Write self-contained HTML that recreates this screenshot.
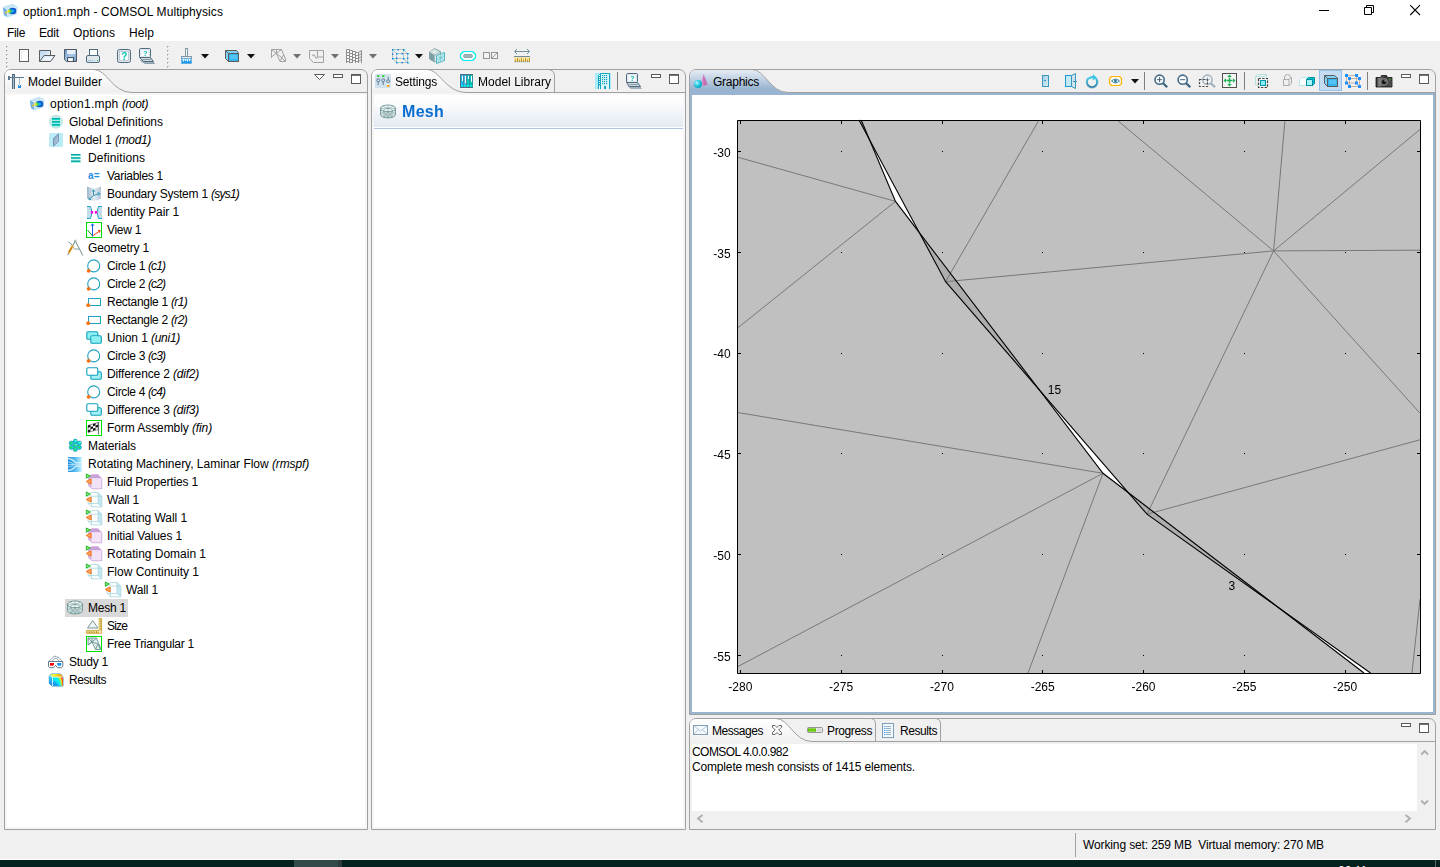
<!DOCTYPE html>
<html lang="en"><head><meta charset="utf-8"><title>option1.mph - COMSOL Multiphysics</title>
<style>
*{box-sizing:border-box;margin:0;padding:0}
html,body{width:1440px;height:867px;overflow:hidden;background:#f0f0f0}
body{position:relative;font-family:"Liberation Sans",sans-serif;font-size:12px;color:#000;line-height:1}
.abs{position:absolute}
.t{position:absolute;white-space:nowrap;font-size:12px;line-height:14px;height:14px}
svg{position:absolute;overflow:visible}
#titlebar{position:absolute;left:0;top:0;width:1440px;height:41px;background:#fff}
#taskbar{position:absolute;left:0;top:860px;width:1440px;height:7px;background:#04201f;overflow:hidden}
.panel{position:absolute;border:1px solid #a0a0a0;border-radius:7px 7px 0 0;background:#f0f0f0}
.content{position:absolute;background:#fff}
i{font-style:italic}
#tb,#hdr{opacity:.999;will-change:opacity}

</style></head><body>
<svg width="0" height="0" style="left:0;top:0">
 <defs>
  <linearGradient id="gi1" x1="0" y1="0" x2="1" y2="1"><stop offset="0" stop-color="#8fc8ea"/><stop offset="1" stop-color="#d9eef9"/></linearGradient>
  <radialGradient id="gi2" cx="0.5" cy="0.5" r="0.6"><stop offset="0" stop-color="#25c8f0"/><stop offset="0.55" stop-color="#0a5fd8"/><stop offset="1" stop-color="#0838a8"/></radialGradient>
  <linearGradient id="gi3" x1="0" y1="0" x2="1" y2="0"><stop offset="0" stop-color="#9fb6cc"/><stop offset="0.5" stop-color="#e4ecf3"/><stop offset="1" stop-color="#b4c6d6"/></linearGradient>
  <linearGradient id="gi4" x1="0" y1="0" x2="1" y2="0"><stop offset="0" stop-color="#1a8ade"/><stop offset="0.55" stop-color="#5cc0f0"/><stop offset="1" stop-color="#d2f4ff"/></linearGradient>
  <linearGradient id="gi5" x1="0" y1="0" x2="1" y2="1"><stop offset="0" stop-color="#7f9cc0"/><stop offset="1" stop-color="#c4d4e6"/></linearGradient>
  <linearGradient id="gi7" x1="0" y1="0" x2="1" y2="0"><stop offset="0" stop-color="#b8f0a0"/><stop offset="0.35" stop-color="#fff020"/><stop offset="1" stop-color="#ff9010"/></linearGradient>
  <linearGradient id="gi8" x1="0" y1="0" x2="0" y2="1"><stop offset="0" stop-color="#30d8f8"/><stop offset="1" stop-color="#1e80e0"/></linearGradient>
  <linearGradient id="gi6" x1="0" y1="0" x2="1" y2="1"><stop offset="0" stop-color="#ffd040"/><stop offset="0.35" stop-color="#ff5a10"/><stop offset="0.6" stop-color="#20d8f0"/><stop offset="1" stop-color="#1e70e8"/></linearGradient>

  <symbol id="i-root" viewBox="0 0 16 16" overflow="visible">
   <path d="M0.800 4 L10.500 1 L15.600 3.500 L14.800 11.500 L5.500 14.400 L2 12 Z" fill="url(#gi1)" opacity="0.92"/>
   <path d="M0.800 4 L5 6 L5.500 14.400 L2 12 Z" fill="#4f9ad6" opacity="0.650"/>
   <path d="M0.800 4 L10.500 1 L15.600 3.500 L5 6 Z" fill="#cfe8f8" opacity="0.700"/>
   <path d="M0.800 4 L5 6 L5.500 14.400 M5 6 L15.600 3.500" stroke="#eef8fe" stroke-width="0.700" fill="none"/>
   <ellipse cx="10.600" cy="8" rx="3.700" ry="3.200" fill="url(#gi2)"/>
   <ellipse cx="8" cy="8.300" rx="1.900" ry="2.200" fill="#28c878"/>
   <ellipse cx="6.800" cy="8.200" rx="1.300" ry="1.500" fill="#e8e020"/>
   <circle cx="4" cy="9.600" r="1" fill="#f0c028"/>
  </symbol>
  <symbol id="i-gdef" viewBox="0 0 16 16" overflow="visible">
   <circle cx="8" cy="7.800" r="7" fill="#c4e8e4"/>
   <rect x="4" y="4" width="8" height="1.800" fill="#00b5ad"/><rect x="4" y="7" width="8" height="1.800" fill="#00b5ad"/><rect x="4" y="10" width="8" height="1.800" fill="#00b5ad"/>
   <rect x="4" y="5.400" width="8" height="0.700" fill="#00e0d6"/><rect x="4" y="8.400" width="8" height="0.700" fill="#00e0d6"/><rect x="4" y="11.400" width="8" height="0.700" fill="#00e0d6"/>
  </symbol>
  <symbol id="i-model" viewBox="0 0 16 16" overflow="visible">
   <rect x="1" y="1" width="14" height="14" rx="1.500" fill="#b9ecf6"/>
   <path d="M5.500 6.500 L10.500 1.800 V9.500 L5.500 14.200 Z" fill="url(#gi5)" stroke="#5f7fa8" stroke-width="0.700" stroke-linejoin="round"/>
  </symbol>
  <symbol id="i-defs" viewBox="0 0 16 16" overflow="visible">
   <rect x="4" y="4" width="9.500" height="1.700" fill="#00a89f"/><rect x="4" y="7.200" width="9.500" height="1.700" fill="#00a89f"/><rect x="4" y="10.400" width="9.500" height="1.700" fill="#00a89f"/>
   <rect x="4" y="5.500" width="9.500" height="0.600" fill="#60e8e0"/><rect x="4" y="8.700" width="9.500" height="0.600" fill="#60e8e0"/><rect x="4" y="11.900" width="9.500" height="0.600" fill="#60e8e0"/>
  </symbol>
  <symbol id="i-var" viewBox="0 0 16 16" overflow="visible">
   <text x="2" y="10.800" font-size="10" font-weight="bold" opacity="0.99" fill="#1e8ee6" font-family="Liberation Sans, sans-serif" letter-spacing="0.300">a=</text>
  </symbol>
  <symbol id="i-bsys" viewBox="0 0 16 16" overflow="visible">
   <path d="M1 0.500 Q8 4 15 0.500 V12.500 Q8 17 1 12.500 Z" fill="url(#gi3)"/>
   <path d="M7.500 9.500 V4 M6 5.600 L7.500 3.800 L9 5.600 M7.500 9.500 L3 13.500 M3 11.600 V13.600 H5 M7.500 9.500 L13.500 7.500 M11.500 6.600 L13.600 7.500 L12.600 9.400" fill="none" stroke="#218fb0" stroke-width="0.900"/>
  </symbol>
  <symbol id="i-ipair" viewBox="0 0 16 16" overflow="visible">
   <path d="M1 2.500 H4.500 Q7.500 8.500 4.500 14.500 H1 Z" fill="#c3deea"/>
   <path d="M16 2.500 H12.500 Q9.500 8.500 12.500 14.500 H16 Z" fill="#c3deea"/>
   <path d="M1 2.500 H4.500 Q7.500 8.500 4.500 14.500 H1 M16 2.500 H12.500 Q9.500 8.500 12.500 14.500 H16" fill="none" stroke="#1fa8c8" stroke-width="1"/>
   <rect x="4.800" y="7" width="2.400" height="2.600" fill="#ff00e0"/><rect x="8.800" y="7" width="2.400" height="2.600" fill="#ff00e0"/>
  </symbol>
  <symbol id="i-view" viewBox="0 0 16 16" overflow="visible">
   <rect x="0.500" y="0.500" width="15" height="15" fill="#fff" stroke="#00e000"/>
   <path d="M6.500 14 L1.500 8" stroke="#10a010" stroke-width="1"/>
   <path d="M6.500 14 L14 8.800 M12 8.400 L14.200 8.600 L13.300 10.600" stroke="#f04010" stroke-width="1" fill="none"/>
   <path d="M6.500 14.500 V2 M5 3.800 L6.500 1.800 L8 3.800" stroke="#1060e8" stroke-width="1" fill="none"/>
  </symbol>
  <symbol id="i-geom" viewBox="0 0 16 16" overflow="visible">
   <path d="M1.500 2 Q5 3 6.500 8" fill="none" stroke="#5f7f80" stroke-width="0.800"/>
   <path d="M8.300 0.800 L15.800 15.500" stroke="#6e8e8e" stroke-width="1"/>
   <path d="M8.300 0.800 L5 7" stroke="#6e8e8e" stroke-width="1"/>
   <path d="M5.800 5.500 L1.600 13" stroke="#e8a020" stroke-width="2"/>
   <path d="M4.600 7.800 L3.400 9.800 M3 10.600 L2.200 12" stroke="#a86a10" stroke-width="2" opacity="0.500"/>
   <path d="M1.600 13 L0.700 15" stroke="#6e8e8e" stroke-width="1"/>
   <path d="M6.500 9 H12" stroke="#6e8e8e" stroke-width="0.800"/>
   <circle cx="8.300" cy="1" r="0.900" fill="#fff" stroke="#6e8e8e" stroke-width="0.700"/>
  </symbol>
  <symbol id="i-circ" viewBox="0 0 16 16" overflow="visible">
   <circle cx="7.700" cy="7.900" r="6" fill="none" stroke="#22a2c2" stroke-width="1.100"/>
   <circle cx="2.600" cy="12.800" r="1.900" fill="#ff7010"/>
  </symbol>
  <symbol id="i-rect" viewBox="0 0 16 16" overflow="visible">
   <rect x="2.500" y="4.500" width="12" height="7" fill="#fff" stroke="#22a2c2" stroke-width="1"/>
   <circle cx="2.200" cy="11.200" r="1.900" fill="#ff7010"/>
  </symbol>
  <symbol id="i-uni" viewBox="0 0 16 16" overflow="visible">
   <rect x="0.800" y="1.800" width="11" height="7.500" rx="1.300" fill="#8cf0f2" stroke="#10a0ba" stroke-width="1.100"/>
   <rect x="4.800" y="5.800" width="10.500" height="7.500" rx="1.300" fill="#8cf0f2" stroke="#10a0ba" stroke-width="1.100"/>
   <rect x="5.400" y="6.400" width="5.800" height="2.400" fill="#8cf0f2"/>
  </symbol>
  <symbol id="i-dif" viewBox="0 0 16 16" overflow="visible">
   <rect x="4.800" y="5.800" width="10.500" height="7.500" rx="1.300" fill="#a4f1f5" stroke="#10a0ba" stroke-width="1.100"/>
   <rect x="0.800" y="1.800" width="11" height="7.500" rx="1.300" fill="#fff" stroke="#10a0ba" stroke-width="1.100"/>
  </symbol>
  <symbol id="i-fin" viewBox="0 0 16 16" overflow="visible">
   <rect x="0.500" y="0.500" width="15" height="15" fill="#fff" stroke="#00e000"/>
   <path d="M12.500 2 V14.500" stroke="#777" stroke-width="1.200"/>
   <path d="M2 5.500 L12 2.500 V9.500 L2 12.500 Z" fill="#fff" stroke="#333" stroke-width="0.500"/>
   <path d="M2 5.500 L4.500 4.750 V7 L2 7.750 Z M7 4 L9.500 3.250 V5.500 L7 6.250 Z M4.500 7 L7 6.250 V8.500 L4.500 9.250 Z M9.500 5.500 L12 4.750 V7 L9.500 7.750 Z M2 10.200 L4.500 9.250 V11.500 L2 12.500 Z M7 8.500 L9.500 7.750 V10 L7 10.750 Z" fill="#111"/>
  </symbol>
  <symbol id="i-mat" viewBox="0 0 16 16" overflow="visible">
   <g fill="#12dfe2" stroke="#108a9c" stroke-width="0.600">
    <circle cx="8.300" cy="3.200" r="2.100"/><circle cx="4.300" cy="5.200" r="2.100"/><circle cx="12.300" cy="5.200" r="2.100"/>
    <circle cx="8.300" cy="7.300" r="2.100"/><circle cx="4.300" cy="9.400" r="2.100"/><circle cx="12.300" cy="9.400" r="2.100"/><circle cx="8.300" cy="11.400" r="2.100"/>
   </g>
   <g fill="#22e322"><circle cx="4" cy="5.200" r="0.900"/><circle cx="8" cy="7.300" r="0.900"/><circle cx="4" cy="9.400" r="0.900"/><circle cx="8" cy="11.400" r="0.900"/><circle cx="12" cy="9.400" r="0.800"/></g>
   <g fill="#b8fbfb"><circle cx="9" cy="2.600" r="0.700"/><circle cx="13" cy="4.600" r="0.700"/><circle cx="9" cy="6.700" r="0.600"/></g>
  </symbol>
  <symbol id="i-phys" viewBox="0 0 16 16" overflow="visible">
   <rect x="1" y="1" width="14" height="15" fill="url(#gi4)"/>
   <path d="M1 2.500 Q6 3 8.500 6.800 H15 M1 14.500 Q6 14 8.500 10.200 H15" fill="none" stroke="#d8f2ff" stroke-width="1.500" opacity="0.850"/>
   <path d="M1 6 Q4.500 6.300 6.500 8 M1 11 Q4.500 10.700 6.500 9 M1 8.500 H15" fill="none" stroke="#c4e8fc" stroke-width="0.900" opacity="0.800"/>
  </symbol>
  <g id="arrs">
   <path d="M0.300 0 L4.300 2 L0.300 4.200 Z" fill="#8fe68f" stroke="#18b418" stroke-width="0.900" stroke-linejoin="round"/>
   <path d="M5 5 L0.300 7.500 L5 10 Z" fill="#ffb070" stroke="#ff6a08" stroke-width="1" stroke-linejoin="round"/>
  </g>
  <symbol id="i-pdom" viewBox="0 0 16 16" overflow="visible">
   <path d="M2 2 L6 0.500 H12 L15.800 4.200 V14.800 H5.500 L2 11.500 Z" fill="#d4b2e2"/>
   <path d="M2 2 L6 0.500 H12 L15.800 4.200 H5.500 Z" fill="#c9a0d8"/>
   <rect x="5.500" y="4.200" width="10.300" height="10.600" fill="#f1e2f8"/>
   <path d="M5.500 14.800 H15.800 V4.200" fill="none" stroke="#c9a0d8" stroke-width="0.700"/>
   <use href="#arrs"/>
  </symbol>
  <symbol id="i-pbnd" viewBox="0 0 16 16" overflow="visible">
   <path d="M2 2 L6 0.500 H12 L15.800 4.200 V14.800 H5.500 L2 11.500 Z" fill="#fdfefe"/>
   <path d="M12 0.500 L15.800 4.200 V14.800 L12 11.500 Z" fill="#c3e8f1"/>
   <path d="M2 2 L6 0.500 H12 L15.800 4.200 V14.800 H5.500 L2 11.500 Z M5.500 4.200 H15.800 M5.500 4.200 V14.800 M2 2 L5.500 4.200 M12 0.500 V11.500 L15.800 14.800 M12 11.500 H2" fill="none" stroke="#a9d6de" stroke-width="0.800"/>
   <use href="#arrs"/>
  </symbol>
  <symbol id="i-mesh" viewBox="0 0 16 16" overflow="visible">
   <path d="M0.500 4.300 V10.600 A7.500 3.300 0 0 0 15.500 10.600 V4.300 Z" fill="#d3e0e0"/>
   <ellipse cx="8" cy="4.300" rx="7.500" ry="3.300" fill="#fbfdfd"/>
   <g fill="none" stroke="#5c8a8a" stroke-width="0.800">
    <ellipse cx="8" cy="4.300" rx="7.500" ry="3.300"/>
    <path d="M0.500 4.300 V10.600 A7.500 3.300 0 0 0 15.500 10.600 V4.300"/>
   </g>
   <g fill="none" stroke="#6a9494" stroke-width="0.550">
    <path d="M2.500 2.200 L13.500 6.400 M13.500 2.200 L2.500 6.400 M8 1 V7.600 M0.500 4.300 H15.500"/>
    <path d="M4 7.200 V13.500 M8 7.600 V13.900 M12 7.200 V13.500 M0.500 10.600 L4 7.200 L8 13.900 L12 7.200 L15.500 10.600 M4 13.500 L8 7.600 L12 13.500"/>
   </g>
  </symbol>
  <symbol id="i-size" viewBox="0 0 16 16" overflow="visible">
   <path d="M6.700 2.500 L12 10 H1.500 Z" fill="#eef2f2" stroke="#6e8e8e" stroke-width="0.900" stroke-linejoin="round"/>
   <path d="M0.400 12.400 H13.200 V0.400 H15.600 V15.300 H0.400 Z" fill="#fdf3cc" stroke="#c8a020" stroke-width="0.800"/>
   <path d="M2 13.200 v2 M3.700 13.200 v2 M5.400 13.200 v2 M7.100 13.200 v2 M8.800 13.200 v2 M10.500 13.200 v2 M12.200 13.200 v2 M14 1.800 h1.500 M14 3.500 h1.500 M14 5.200 h1.500 M14 6.900 h1.500 M14 8.600 h1.500 M14 10.300 h1.500 M14 12 h1.500" stroke="#b08810" stroke-width="0.900"/>
  </symbol>
  <symbol id="i-ftri" viewBox="0 0 16 16" overflow="visible">
   <rect x="0.500" y="0.500" width="15" height="15" fill="#fff" stroke="#00e000"/>
   <path d="M2 2 H10.500 L14.500 12 V13.500 H9.500 L6 6 L2 9 Z" fill="#e4ecec"/>
   <path d="M2 9 V2 H10.500 L14.500 12 V13.500 H9.500 L6 6 Z M2 2 L6 6 L10.500 2 M6 6 L2 9 M6 6 L12 8 L9.500 13.500 M12 8 L14.500 13.500 M6 2 V6" fill="none" stroke="#5c8a8a" stroke-width="0.800"/>
  </symbol>
  <symbol id="i-study" viewBox="0 0 16 16" overflow="visible">
   <path d="M0.800 7.300 L6 2.300 H8 L10 4.300 M14.600 7.300 L9.500 2.300 M3.800 7.300 L7 4.300 H8.500 L11.500 7.300" fill="none" stroke="#7a8c9c" stroke-width="0.800"/>
   <path d="M0.500 7.500 H14.800 V12.500 L13.500 13.700 H9.500 L7.600 11.300 L5.700 13.700 H1.800 L0.500 12.500 Z" fill="#fff" stroke="#4e6b80" stroke-width="0.900" stroke-linejoin="round"/>
   <path d="M2 9 H6 V10.500 L5 11.800 H2 Z" fill="#ff0808"/>
   <path d="M9.200 9 H13.200 V11.800 H10.200 L9.200 10.500 Z" fill="#1094f4"/>
  </symbol>
  <symbol id="i-res" viewBox="0 0 16 16" overflow="visible">
   <path d="M1.300 3.600 L3.800 2 H12.500 L15 5 V14 H4.500 L1.300 11.500 Z" fill="#1e98e8" stroke="#2a8ac8" stroke-width="0.900" stroke-linejoin="round"/>
   <path d="M1.300 3.600 L3.800 2 H12.500 L15 5 H4.500 Z" fill="url(#gi7)"/>
   <path d="M1.300 3.600 L4.500 5 V14 L1.300 11.500 Z" fill="url(#gi8)"/>
   <rect x="4.500" y="5" width="10.500" height="9" fill="#00f0f4"/>
   <path d="M4.500 14 V9 Q8 10 11 14 Z" fill="#1e98e8"/>
   <path d="M4.500 9 Q8 10 11 14 H12.500 Q9 9 4.500 7.500 Z" fill="#18c8f4"/>
   <path d="M15 5 V14 H13.500 Q13.500 8 10.500 5 Z" fill="#ffd020"/>
   <path d="M15 5 V14 H14.300 Q14.500 8 12.500 5 Z" fill="#ff5a10"/>
   <path d="M10.500 5 Q13.500 8 13.500 14 H12.800 Q12.500 8.500 9 5 Z" fill="#90f060"/>
   <path d="M4.500 5 H15 M4.500 5 V14 M1.300 3.600 L4.500 5" stroke="#f4fbff" stroke-width="0.800" fill="none"/>
  </symbol>
  <g id="meshico"><use href="#i-mesh" width="16" height="16"/></g>
 </defs>
</svg>

<div id="titlebar">
  <div class="t" style="left:23px;top:5px;"><span style="letter-spacing:0.092px">option1.mph - COMSOL Multiphysics</span></div>
  <div class="t" style="left:7px;top:26px"><span style="letter-spacing:-0.334px">File</span></div>
  <div class="t" style="left:39px;top:26px"><span style="letter-spacing:-0.170px">Edit</span></div>
  <div class="t" style="left:73px;top:26px"><span style="letter-spacing:0.092px">Options</span></div>
  <div class="t" style="left:129px;top:26px"><span style="letter-spacing:0.080px">Help</span></div>
</div>
<svg style="left:2px;top:3px" width="16" height="16"><use href="#i-root"/></svg>
<svg style="left:0;top:0" width="1440" height="22" viewBox="0 0 1440 22">
 <path d="M1319 10.500 H1329" stroke="#000" stroke-width="1"/>
 <path d="M1364.500 7.500 H1371.500 V14.500 H1364.500 Z M1366.500 7.500 V5.500 H1373.500 V12.500 H1371.500" fill="none" stroke="#000" stroke-width="1"/>
 <path d="M1410.200 5.200 L1420 15 M1420 5.200 L1410.200 15" stroke="#000" stroke-width="1.100"/>
</svg>
<div class="abs" style="left:0;top:859px;width:1440px;height:1px;background:#fff"></div>
<div id="taskbar"><div class="abs" style="left:294px;top:0;width:44px;height:7px;background:#344b4c"></div><div class="abs" style="left:338px;top:0;width:4px;height:7px;background:#2c3c3c"></div><div class="abs" style="left:1435px;top:0;width:1px;height:7px;background:#5a6a6a"></div><div class="t" style="left:1338px;top:4px;color:#fff;font-size:12px">22:11</div></div>

<!-- main toolbar icons : absolute page coordinates -->
<svg id="tb" style="left:0;top:0" width="1440" height="70" viewBox="0 0 1440 70">
 <defs>
  <linearGradient id="gFold" x1="0" y1="0" x2="1" y2="1"><stop offset="0" stop-color="#b7d6f2"/><stop offset="1" stop-color="#f4f9fe"/></linearGradient>
  <linearGradient id="gSave" x1="0" y1="0" x2="1" y2="1"><stop offset="0" stop-color="#5f8fc4"/><stop offset="0.5" stop-color="#a9c9ea"/><stop offset="1" stop-color="#6f9bcc"/></linearGradient>
  <linearGradient id="gBrush" x1="0" y1="0" x2="0" y2="1"><stop offset="0" stop-color="#bfe6fb"/><stop offset="0.5" stop-color="#2aa5f0"/><stop offset="1" stop-color="#0a8be6"/></linearGradient>
  <g id="grip">
   <rect x="0" y="0" width="2" height="2" fill="#fff"/><rect x="0" y="0" width="1" height="1" fill="#a0a0a0"/><rect x="1" y="0" width="1" height="1" fill="#c8c8c8"/><rect x="0" y="1" width="1" height="1" fill="#c8c8c8"/>
  </g>
  <g id="gripcol">
   <use href="#grip" y="0"/><use href="#grip" y="4"/><use href="#grip" y="8"/><use href="#grip" y="12"/><use href="#grip" y="16"/><use href="#grip" y="20"/>
  </g>
  <path id="dd" d="M0 0 H8 L4 4.5 Z"/>
 </defs>
 <use href="#gripcol" x="6" y="46"/>
 <use href="#gripcol" x="167" y="46"/>
 <!-- new -->
 <rect x="19.5" y="49.5" width="9" height="12" fill="#fff" stroke="#5c5c5c"/>
 <rect x="21" y="51" width="1" height="9" fill="#e8e8e8"/>
 <!-- open -->
 <path d="M39.5 61.5 V50.5 H50.5 V55.5" fill="url(#gFold)" stroke="#5c5c5c"/>
 <path d="M39.5 61.5 L44 55.5 H55 L50.5 61.5 Z" fill="url(#gFold)" stroke="#5c5c5c" stroke-linejoin="round"/>
 <path d="M41.5 60.5 L45 56.5 H53 L50 60.5 Z" fill="#eef5fc"/>
 <!-- save -->
 <path d="M64.5 49.5 H76.5 V61.5 H66.5 L64.5 59.5 Z" fill="url(#gSave)" stroke="#4f5861"/>
 <rect x="67" y="50" width="8" height="4" fill="#e9f1fa"/>
 <rect x="67.5" y="57.5" width="6" height="4" fill="#dfe9f5" stroke="#4f5861"/>
 <rect x="69" y="59" width="3" height="2" fill="#fff"/>
 <!-- print -->
 <rect x="89.5" y="49.5" width="8" height="7" fill="#fff" stroke="#4e6b80"/>
 <rect x="86.5" y="55.5" width="13" height="7" rx="1.5" fill="#dfe6ec" stroke="#4e6b80"/>
 <rect x="88" y="60" width="8" height="1" fill="#bfe8fb"/>
 <rect x="88" y="60" width="1" height="1" fill="#aab"/><rect x="90" y="60" width="1" height="1" fill="#aab"/><rect x="92" y="60" width="1" height="1" fill="#aab"/>
 <rect x="97" y="60" width="1" height="1" fill="#1fc01f"/>
 <!-- help -->
 <rect x="117.5" y="49.5" width="13" height="13" rx="2" fill="#dfe6ec" stroke="#4e6b80"/>
 <rect x="119.5" y="51.5" width="9" height="9" fill="#fff" stroke="#9fb2c0" stroke-width="0.6"/>
 <text x="124.2" y="59.6" font-size="10" font-weight="bold" fill="#00c5b5" opacity="0.99" text-anchor="middle" font-family="Liberation Sans, sans-serif">?</text>
 <!-- laptop help -->
 <path d="M140.5 60.5 L145 63.5 H154.5 L150.5 59" fill="#9fb0bb" stroke="#8ea0ad"/>
 <rect x="139.5" y="48.5" width="11" height="9" rx="1" fill="#dfe6ec" stroke="#4e6b80"/>
 <rect x="141.5" y="50.5" width="7" height="5.5" fill="#fff"/>
 <path d="M139.5 57.5 L143.5 61.5 H153.5 L150.5 57.5 Z" fill="#cfd8df" stroke="#4e6b80" stroke-linejoin="round"/>
 <path d="M142.5 59.5 H151" stroke="#8ea0ad"/>
 <text x="145.2" y="56" font-size="7.5" font-weight="bold" fill="#00c5b5" opacity="0.99" text-anchor="middle" font-family="Liberation Sans, sans-serif">?</text>
 <!-- brush -->
 <rect x="185.5" y="48.5" width="2" height="8" fill="#fff" stroke="#7f99a5"/>
 <rect x="181.5" y="56.5" width="10" height="2" fill="#e4eaee" stroke="#7f99a5"/>
 <rect x="181.5" y="58.5" width="10" height="5" fill="url(#gBrush)" stroke="#5aa6d8" stroke-width="0.6"/>
 <path d="M183.5 59 v2.5 M185.5 59 v2 M187.5 59 v2.5 M189.5 59 v2" stroke="#eaf6ff" stroke-width="1"/>
 <use href="#dd" x="201" y="54" fill="#111"/>
 <!-- cube -->
 <path d="M225.5 50.5 H236.5 L238.5 53 V61.5 H228.5 L225.5 58.5 Z" fill="#7fd2fa" stroke="#5c5c5c" stroke-linejoin="round"/>
 <rect x="228.5" y="53.5" width="10" height="8" fill="#33b5f0" stroke="#5c5c5c"/>
 <rect x="230" y="55" width="7" height="4" fill="#55c4f5"/>
 <path d="M225.5 50.5 L228.5 53.5" stroke="#5c5c5c"/>
 <use href="#dd" x="247" y="54" fill="#111"/>
 <!-- mesh gray -->
 <path d="M271.5 58 V49.5 H281.5 L285.5 59 V61.5 H280 L276.5 53.5 M271.5 49.5 L281 57 M281.5 49.5 L272 56.5 M276.5 49.5 V54 M281 57 L285 61 M280 61 L283.5 55" fill="none" stroke="#9a9a9a" stroke-width="0.9"/>
 <use href="#dd" x="293" y="54" fill="#6f6f6f"/>
 <!-- plot gray -->
 <path d="M309.5 50.5 H323.5 V62.5 H313.5 L309.5 58.5 Z M317.5 50.5 V57 M312 56 L314 54.5 L316 58.5 L318 57 H323.5" fill="none" stroke="#9a9a9a" stroke-width="0.9"/>
 <use href="#dd" x="331" y="54" fill="#6f6f6f"/>
 <!-- flag mesh gray -->
 <path d="M346.5 49.5 V63 M349.5 49.5 V63 M352.5 50.5 V63 M355.5 51.5 V63 M358.5 52.5 V63 M361.5 50.5 V63 M346.5 49.5 H349.5 M346.5 52.5 H349.5 M346.5 55.5 H349.5 M346.5 58.5 H349.5 M346.5 61.5 H349.5 M349.5 50.5 H352.5 M349.5 53.5 H352.5 M349.5 56.5 H352.5 M349.5 59.5 H352.5 M349.5 62.5 H352.5 M352.5 51.5 H355.5 M352.5 54.5 H355.5 M352.5 57.5 H355.5 M352.5 60.5 H355.5 M355.5 52.5 H358.5 M355.5 55.5 H358.5 M355.5 58.5 H358.5 M355.5 61.5 H358.5 M358.5 52.5 L361.5 50.5 M358.5 55.5 L361.5 53.5 M358.5 58.5 L361.5 56.5 M358.5 61.5 L361.5 59.5" fill="none" stroke="#8e8e8e" stroke-width="1"/>
 <path d="M347 50 h2 v2 h-2z M347 53 h2 v2 h-2z M347 56 h2 v2 h-2z M347 59 h2 v2 h-2z M350 51 h2 v2 h-2z M350 54 h2 v2 h-2z M350 57 h2 v2 h-2z M353 52 h2 v2 h-2z M353 55 h2 v2 h-2z M353 58 h2 v2 h-2z M356 53 h2 v2 h-2z M356 56 h2 v2 h-2z M356 59 h2 v2 h-2z" fill="#fff" opacity="0.75"/>
 <use href="#dd" x="369" y="54" fill="#6f6f6f"/>
 <!-- dotted cube -->
 <g stroke="#a9c4c4" stroke-width="0.9" fill="none">
  <path d="M392.5 49.5 H403.5 L407.5 53.5 V62.5 H396.5 L392.5 58.5 Z M396.5 53.5 H407.5 M396.5 53.5 V62.5 M392.5 49.5 L396.5 53.5 M392.5 58.5 H403.5 V49.5 M403.5 58.5 L407.5 62.5"/>
 </g>
 <g fill="#1f6fe0">
  <rect x="392" y="49" width="1.4" height="1.4"/><rect x="397.5" y="49" width="1.4" height="1.4"/><rect x="403" y="49" width="1.4" height="1.4"/>
  <rect x="392" y="53.5" width="1.4" height="1.4"/><rect x="396" y="53" width="1.4" height="1.4"/><rect x="401.5" y="53" width="1.4" height="1.4"/><rect x="407" y="53" width="1.4" height="1.4"/>
  <rect x="392" y="58" width="1.4" height="1.4"/><rect x="396" y="57.5" width="1.4" height="1.4"/><rect x="403" y="58" width="1.4" height="1.4"/><rect x="407" y="57.5" width="1.4" height="1.4"/>
  <rect x="396" y="62" width="1.4" height="1.4"/><rect x="401.5" y="62" width="1.4" height="1.4"/><rect x="407" y="62" width="1.4" height="1.4"/>
 </g>
 <g fill="#00e5f0" opacity="0.8">
  <rect x="393.2" y="49" width="1" height="1.4"/><rect x="404.2" y="49" width="1" height="1.4"/><rect x="397.2" y="53" width="1" height="1.4"/><rect x="408.2" y="53" width="1" height="1.4"/><rect x="397.2" y="62" width="1" height="1.4"/><rect x="408.2" y="62" width="1" height="1.4"/><rect x="393.2" y="58" width="1" height="1.4"/><rect x="404.2" y="58" width="1" height="1.4"/>
 </g>
 <use href="#dd" x="415" y="54" fill="#111"/>
 <!-- 3d mesh box -->
 <path d="M429.5 52 L434.5 48.5 L440.5 51.5 V58.5 L434.5 62 L429.5 59 Z" fill="#cfdfe0" stroke="#7a9a9e" stroke-width="0.8" stroke-linejoin="round"/>
 <path d="M429.5 52 L434.5 55 V62 L429.5 59 Z" fill="#7d9ea2"/>
 <path d="M434.5 55 L440.5 51.5" stroke="#7a9a9e" stroke-width="0.8"/>
 <path d="M431 50.8 L437 54 M432.5 49.8 L438.5 52.8 M436 55 V61 M438 53.5 V60" stroke="#fff" stroke-width="0.6" opacity="0.8"/>
 <path d="M436.5 55.5 L444.5 52.5 V60.5 L436.5 63.5 Z" fill="#c6ecef" stroke="#3fb3bd" stroke-width="0.9" stroke-linejoin="round"/>
 <path d="M438 56 L443.5 60 M438 62 L443.5 54 M440.5 54.5 V62 M436.5 59.5 L444.5 56.5" stroke="#62c3cc" stroke-width="0.6"/>
 <!-- cyan pill -->
 <path d="M463.5 51.5 H472.5 L475.5 54.5 V57.5 L472.5 60.5 H463.5 L460.5 57.5 V54.5 Z" fill="#f4ffff" stroke="#00f0e6" stroke-width="1.2" stroke-linejoin="round"/>
 <rect x="463.5" y="54.5" width="9" height="3" rx="1.5" fill="#9fb6b8" stroke="#7f9ea2" stroke-width="0.8"/>
 <!-- two squares -->
 <rect x="483.5" y="52.5" width="6" height="6" fill="#f4f4f4" stroke="#949494"/>
 <rect x="491.5" y="52.5" width="6" height="6" fill="#f4f4f4" stroke="#949494"/>
 <path d="M492 58 L497 53" stroke="#949494" stroke-width="0.9"/>
 <!-- ruler -->
 <path d="M514.5 51.5 H529.5 M517 49 L514.5 51.5 L517 54 M527 49 L529.5 51.5 L527 54" fill="none" stroke="#7392a0" stroke-width="1"/>
 <rect x="514" y="56" width="16" height="1" fill="#6e8c9c"/>
 <rect x="514" y="57" width="16" height="5" fill="#f7e2a8"/>
 <path d="M515.5 59.5 v2.5 M517.5 58 v4 M519.5 59.5 v2.5 M521.5 58 v4 M523.5 59.5 v2.5 M525.5 58 v4 M527.5 59.5 v2.5 M529.5 58 v4" stroke="#c39a1e" stroke-width="1"/>
 <rect x="514" y="61.4" width="16" height="0.8" fill="#8aa0a8" opacity="0.7"/>
</svg>

<!-- Model Builder panel -->
<div class="panel" id="p1" style="left:4px;top:69px;width:364px;height:761px"></div>
<svg id="p1tab" style="left:4px;top:69px" width="364" height="26" viewBox="0 0 364 26">
  <defs><linearGradient id="g1" x1="0" y1="0" x2="0" y2="1"><stop offset="0" stop-color="#ffffff"/><stop offset="1" stop-color="#f0f0f0"/></linearGradient></defs>
  <path d="M1 23.5 V7 Q1 1 7 1 H90 C103 1 108 23.5 128 23.5 Z" fill="url(#g1)"/>
  <path d="M90 0.5 C103 0.5 108 23.5 128 23.5 H363" fill="none" stroke="#a0a0a0" stroke-width="1"/>
</svg>
<div class="abs" style="left:5px;top:93px;width:362px;height:736px;background:#f6f6f6"></div>
<div class="content" style="left:7px;top:95px;width:358px;height:732px"></div>
<div class="t" style="left:28px;top:75px"><span style="letter-spacing:0.048px">Model Builder</span></div>
<svg style="left:29px;top:96px" width="16" height="16"><use href="#i-root"/></svg>
<div class="t" style="left:50px;top:97px"><span style="letter-spacing:0.218px">option1.mph </span><i style="letter-spacing:-0.445px">(root)</i></div>
<svg style="left:48px;top:114px" width="16" height="16"><use href="#i-gdef"/></svg>
<div class="t" style="left:69px;top:115px"><span style="letter-spacing:-0.003px">Global Definitions</span></div>
<svg style="left:48px;top:132px" width="16" height="16"><use href="#i-model"/></svg>
<div class="t" style="left:69px;top:133px"><span style="letter-spacing:-0.003px">Model 1 </span><i style="letter-spacing:-0.335px">(mod1)</i></div>
<svg style="left:67px;top:150px" width="16" height="16"><use href="#i-defs"/></svg>
<div class="t" style="left:88px;top:151px"><span style="letter-spacing:0.089px">Definitions</span></div>
<svg style="left:86px;top:168px" width="16" height="16"><use href="#i-var"/></svg>
<div class="t" style="left:107px;top:169px"><span style="letter-spacing:-0.286px">Variables 1</span></div>
<svg style="left:86px;top:186px" width="16" height="16"><use href="#i-bsys"/></svg>
<div class="t" style="left:107px;top:187px"><span style="letter-spacing:-0.225px">Boundary System 1 </span><i style="letter-spacing:-0.778px">(sys1)</i></div>
<svg style="left:86px;top:204px" width="16" height="16"><use href="#i-ipair"/></svg>
<div class="t" style="left:107px;top:205px"><span style="letter-spacing:-0.091px">Identity Pair 1</span></div>
<svg style="left:86px;top:222px" width="16" height="16"><use href="#i-view"/></svg>
<div class="t" style="left:107px;top:223px"><span style="letter-spacing:-0.300px">View 1</span></div>
<svg style="left:67px;top:240px" width="16" height="16"><use href="#i-geom"/></svg>
<div class="t" style="left:88px;top:241px"><span style="letter-spacing:-0.169px">Geometry 1</span></div>
<svg style="left:86px;top:258px" width="16" height="16"><use href="#i-circ"/></svg>
<div class="t" style="left:107px;top:259px"><span style="letter-spacing:-0.334px">Circle 1 </span><i style="letter-spacing:-0.917px">(c1)</i></div>
<svg style="left:86px;top:276px" width="16" height="16"><use href="#i-circ"/></svg>
<div class="t" style="left:107px;top:277px"><span style="letter-spacing:-0.334px">Circle 2 </span><i style="letter-spacing:-0.917px">(c2)</i></div>
<svg style="left:86px;top:294px" width="16" height="16"><use href="#i-rect"/></svg>
<div class="t" style="left:107px;top:295px"><span style="letter-spacing:-0.281px">Rectangle 1 </span><i style="letter-spacing:-0.666px">(r1)</i></div>
<svg style="left:86px;top:312px" width="16" height="16"><use href="#i-rect"/></svg>
<div class="t" style="left:107px;top:313px"><span style="letter-spacing:-0.281px">Rectangle 2 </span><i style="letter-spacing:-0.666px">(r2)</i></div>
<svg style="left:86px;top:330px" width="16" height="16"><use href="#i-uni"/></svg>
<div class="t" style="left:107px;top:331px"><span style="letter-spacing:-0.087px">Union 1 </span><i style="letter-spacing:-0.280px">(uni1)</i></div>
<svg style="left:86px;top:348px" width="16" height="16"><use href="#i-circ"/></svg>
<div class="t" style="left:107px;top:349px"><span style="letter-spacing:-0.334px">Circle 3 </span><i style="letter-spacing:-0.917px">(c3)</i></div>
<svg style="left:86px;top:366px" width="16" height="16"><use href="#i-dif"/></svg>
<div class="t" style="left:107px;top:367px"><span style="letter-spacing:-0.140px">Difference 2 </span><i style="letter-spacing:-0.223px">(dif2)</i></div>
<svg style="left:86px;top:384px" width="16" height="16"><use href="#i-circ"/></svg>
<div class="t" style="left:107px;top:385px"><span style="letter-spacing:-0.334px">Circle 4 </span><i style="letter-spacing:-0.917px">(c4)</i></div>
<svg style="left:86px;top:402px" width="16" height="16"><use href="#i-dif"/></svg>
<div class="t" style="left:107px;top:403px"><span style="letter-spacing:-0.140px">Difference 3 </span><i style="letter-spacing:-0.223px">(dif3)</i></div>
<svg style="left:86px;top:420px" width="16" height="16"><use href="#i-fin"/></svg>
<div class="t" style="left:107px;top:421px"><span style="letter-spacing:-0.073px">Form Assembly </span><i style="letter-spacing:-0.133px">(fin)</i></div>
<svg style="left:67px;top:438px" width="16" height="16"><use href="#i-mat"/></svg>
<div class="t" style="left:88px;top:439px"><span style="letter-spacing:-0.076px">Materials</span></div>
<svg style="left:67px;top:456px" width="16" height="16"><use href="#i-phys"/></svg>
<div class="t" style="left:88px;top:457px"><span style="letter-spacing:-0.016px">Rotating Machinery, Laminar Flow </span><i style="letter-spacing:-0.142px">(rmspf)</i></div>
<svg style="left:86px;top:474px" width="16" height="16"><use href="#i-pdom"/></svg>
<div class="t" style="left:107px;top:475px"><span style="letter-spacing:-0.169px">Fluid Properties 1</span></div>
<svg style="left:86px;top:492px" width="16" height="16"><use href="#i-pbnd"/></svg>
<div class="t" style="left:107px;top:493px"><span style="letter-spacing:-0.149px">Wall 1</span></div>
<svg style="left:86px;top:510px" width="16" height="16"><use href="#i-pbnd"/></svg>
<div class="t" style="left:107px;top:511px"><span style="letter-spacing:-0.061px">Rotating Wall 1</span></div>
<svg style="left:86px;top:528px" width="16" height="16"><use href="#i-pdom"/></svg>
<div class="t" style="left:107px;top:529px"><span style="letter-spacing:-0.135px">Initial Values 1</span></div>
<svg style="left:86px;top:546px" width="16" height="16"><use href="#i-pdom"/></svg>
<div class="t" style="left:107px;top:547px"><span style="letter-spacing:-0.023px">Rotating Domain 1</span></div>
<svg style="left:86px;top:564px" width="16" height="16"><use href="#i-pbnd"/></svg>
<div class="t" style="left:107px;top:565px"><span style="letter-spacing:-0.002px">Flow Continuity 1</span></div>
<svg style="left:105px;top:582px" width="16" height="16"><use href="#i-pbnd"/></svg>
<div class="t" style="left:126px;top:583px"><span style="letter-spacing:-0.149px">Wall 1</span></div>
<div class="abs" style="left:65px;top:599px;width:63px;height:18px;background:#d9d9d9"></div>
<svg style="left:67px;top:600px" width="16" height="16"><use href="#i-mesh"/></svg>
<div class="t" style="left:88px;top:601px"><span style="letter-spacing:-0.225px">Mesh 1</span></div>
<svg style="left:86px;top:618px" width="16" height="16"><use href="#i-size"/></svg>
<div class="t" style="left:107px;top:619px"><span style="letter-spacing:-0.836px">Size</span></div>
<svg style="left:86px;top:636px" width="16" height="16"><use href="#i-ftri"/></svg>
<div class="t" style="left:107px;top:637px"><span style="letter-spacing:-0.257px">Free Triangular 1</span></div>
<svg style="left:48px;top:654px" width="16" height="16"><use href="#i-study"/></svg>
<div class="t" style="left:69px;top:655px"><span style="letter-spacing:-0.242px">Study 1</span></div>
<svg style="left:48px;top:672px" width="16" height="16"><use href="#i-res"/></svg>
<div class="t" style="left:69px;top:673px"><span style="letter-spacing:-0.430px">Results</span></div>

<!-- Settings panel -->
<div class="panel" id="p2" style="left:371px;top:69px;width:315px;height:761px"></div>
<svg id="p2tab" style="left:371px;top:69px" width="315" height="26" viewBox="0 0 315 26">
  <path d="M1 23.5 V7 Q1 1 7 1 H56 C69 1 74 23.5 96 23.5 Z" fill="url(#g1)"/>
  <path d="M56 0.5 C69 0.5 74 23.5 96 23.5 H314" fill="none" stroke="#a0a0a0" stroke-width="1"/>
  <path d="M96 23.5 H183.5 V7 Q183.5 1 177 0.5" fill="none" stroke="#a0a0a0" stroke-width="1"/>
</svg>
<div class="abs" style="left:372px;top:93px;width:313px;height:736px;background:#f6f6f6"></div>
<div class="content" style="left:374px;top:95px;width:309px;height:732px"></div>
<div class="abs" style="left:374px;top:95px;width:309px;height:32px;background:linear-gradient(#ffffff,#fcfcfe 25%,#e3e9f3)"></div>
<div class="abs" style="left:374px;top:128px;width:309px;height:1px;background:#b0c4de"></div>
<div class="t" style="left:395px;top:75px"><span style="letter-spacing:-0.170px">Settings</span></div>
<div class="t" style="left:478px;top:75px"><span style="letter-spacing:0.023px">Model Library</span></div>
<div class="t" id="meshtitle" style="left:402px;top:102px;font-size:16px;line-height:20px;height:20px;font-weight:bold;color:#0a6ed1;letter-spacing:0.3px">Mesh</div>

<!-- Graphics panel -->
<div class="panel" id="p3" style="left:689px;top:69px;width:747px;height:646px"></div>
<svg id="p3tab" style="left:689px;top:69px" width="747" height="26" viewBox="0 0 747 26">
  <defs><linearGradient id="g3" x1="0" y1="0" x2="0" y2="1"><stop offset="0" stop-color="#e6edf5"/><stop offset="0.75" stop-color="#99b4d1"/><stop offset="1" stop-color="#99b4d1"/></linearGradient></defs>
  <path d="M1 26 V7 Q1 1 7 1 H63 C76 1 81 23.500 99 23.500 H746 V26 Z" fill="url(#g3)"/>
  <path d="M63 0.500 C76 0.500 81 23.500 99 23.500 H746" fill="none" stroke="#a0a0a0" stroke-width="1"/>
</svg>
<div class="abs" style="left:690px;top:95px;width:745px;height:619px;background:#99b4d1"></div>
<div class="content" style="left:692px;top:95px;width:741px;height:617px"></div>
<div class="t" style="left:713px;top:75px"><span style="letter-spacing:-0.252px">Graphics</span></div>
<svg id="plotsvg" style="left:0;top:0" width="1440" height="720" viewBox="0 0 1440 720" shape-rendering="auto">
<rect x="737" y="120" width="684" height="554" fill="#c0c0c0"/>
<polygon points="869.3,139.3 895.5,201.4 919.3,232.6" fill="#fff"/>
<polygon points="1039.6,390.2 1103.0,473.3 1128.4,492.7" fill="#fff"/>
<polygon points="1279.4,608.3 1364.0,673.0 1370.5,673.0" fill="#fff"/>
<polygon points="861.2,120.0 869.3,139.3 859.0,120.0" fill="#adadad"/>
<polygon points="919.3,232.6 945.6,281.7 1039.6,390.2" fill="#adadad"/>
<polygon points="1128.4,492.7 1147.0,514.2 1279.4,608.3" fill="#adadad"/>
<line x1="737.0" y1="157.0" x2="895.5" y2="201.4" stroke="#787878" stroke-width="1"/>
<line x1="737.0" y1="328.5" x2="895.5" y2="201.4" stroke="#787878" stroke-width="1"/>
<line x1="945.6" y1="281.7" x2="1039.0" y2="120.0" stroke="#787878" stroke-width="1"/>
<line x1="945.6" y1="281.7" x2="1273.6" y2="250.9" stroke="#787878" stroke-width="1"/>
<line x1="1273.6" y1="250.9" x2="1117.0" y2="120.0" stroke="#787878" stroke-width="1"/>
<line x1="1273.6" y1="250.9" x2="1285.0" y2="120.0" stroke="#787878" stroke-width="1"/>
<line x1="1273.6" y1="250.9" x2="1420.0" y2="129.4" stroke="#787878" stroke-width="1"/>
<line x1="1273.6" y1="250.9" x2="1420.0" y2="250.2" stroke="#787878" stroke-width="1"/>
<line x1="1273.6" y1="250.9" x2="1420.0" y2="413.2" stroke="#787878" stroke-width="1"/>
<line x1="1273.6" y1="250.9" x2="1147.0" y2="514.2" stroke="#787878" stroke-width="1"/>
<line x1="1147.0" y1="514.2" x2="1420.0" y2="439.8" stroke="#787878" stroke-width="1"/>
<line x1="737.0" y1="412.4" x2="1103.0" y2="473.3" stroke="#787878" stroke-width="1"/>
<line x1="737.0" y1="667.0" x2="1103.0" y2="473.3" stroke="#787878" stroke-width="1"/>
<line x1="1028.0" y1="673.0" x2="1103.0" y2="473.3" stroke="#787878" stroke-width="1"/>
<line x1="1420.0" y1="599.0" x2="1412.0" y2="673.0" stroke="#787878" stroke-width="1"/>
<rect x="740" y="151" width="1" height="1" fill="#000"/>
<rect x="740" y="252" width="1" height="1" fill="#000"/>
<rect x="740" y="353" width="1" height="1" fill="#000"/>
<rect x="740" y="453" width="1" height="1" fill="#000"/>
<rect x="740" y="554" width="1" height="1" fill="#000"/>
<rect x="740" y="655" width="1" height="1" fill="#000"/>
<rect x="841" y="151" width="1" height="1" fill="#000"/>
<rect x="841" y="252" width="1" height="1" fill="#000"/>
<rect x="841" y="353" width="1" height="1" fill="#000"/>
<rect x="841" y="453" width="1" height="1" fill="#000"/>
<rect x="841" y="554" width="1" height="1" fill="#000"/>
<rect x="841" y="655" width="1" height="1" fill="#000"/>
<rect x="942" y="151" width="1" height="1" fill="#000"/>
<rect x="942" y="252" width="1" height="1" fill="#000"/>
<rect x="942" y="353" width="1" height="1" fill="#000"/>
<rect x="942" y="453" width="1" height="1" fill="#000"/>
<rect x="942" y="554" width="1" height="1" fill="#000"/>
<rect x="942" y="655" width="1" height="1" fill="#000"/>
<rect x="1042" y="151" width="1" height="1" fill="#000"/>
<rect x="1042" y="252" width="1" height="1" fill="#000"/>
<rect x="1042" y="353" width="1" height="1" fill="#000"/>
<rect x="1042" y="453" width="1" height="1" fill="#000"/>
<rect x="1042" y="554" width="1" height="1" fill="#000"/>
<rect x="1042" y="655" width="1" height="1" fill="#000"/>
<rect x="1143" y="151" width="1" height="1" fill="#000"/>
<rect x="1143" y="252" width="1" height="1" fill="#000"/>
<rect x="1143" y="353" width="1" height="1" fill="#000"/>
<rect x="1143" y="453" width="1" height="1" fill="#000"/>
<rect x="1143" y="554" width="1" height="1" fill="#000"/>
<rect x="1143" y="655" width="1" height="1" fill="#000"/>
<rect x="1244" y="151" width="1" height="1" fill="#000"/>
<rect x="1244" y="252" width="1" height="1" fill="#000"/>
<rect x="1244" y="353" width="1" height="1" fill="#000"/>
<rect x="1244" y="453" width="1" height="1" fill="#000"/>
<rect x="1244" y="554" width="1" height="1" fill="#000"/>
<rect x="1244" y="655" width="1" height="1" fill="#000"/>
<rect x="1345" y="151" width="1" height="1" fill="#000"/>
<rect x="1345" y="252" width="1" height="1" fill="#000"/>
<rect x="1345" y="353" width="1" height="1" fill="#000"/>
<rect x="1345" y="453" width="1" height="1" fill="#000"/>
<rect x="1345" y="554" width="1" height="1" fill="#000"/>
<rect x="1345" y="655" width="1" height="1" fill="#000"/>
<polyline points="861.2,120.0 895.5,201.4 1103.0,473.3 1364.0,673.0" fill="none" stroke="#000" stroke-width="1.1"/>
<polyline points="859.0,120.0 945.6,281.7 1147.0,514.2 1370.5,673.0" fill="none" stroke="#000" stroke-width="1.1"/>
<path d="M737.5 120.5 H1420.5 V673.5 H737.5 Z" fill="none" stroke="#000" stroke-width="1"/>
<path d="M740.5 120 v4 M740.5 674 v-4" stroke="#000" stroke-width="1"/>
<path d="M841.5 120 v4 M841.5 674 v-4" stroke="#000" stroke-width="1"/>
<path d="M942.5 120 v4 M942.5 674 v-4" stroke="#000" stroke-width="1"/>
<path d="M1042.5 120 v4 M1042.5 674 v-4" stroke="#000" stroke-width="1"/>
<path d="M1143.5 120 v4 M1143.5 674 v-4" stroke="#000" stroke-width="1"/>
<path d="M1244.5 120 v4 M1244.5 674 v-4" stroke="#000" stroke-width="1"/>
<path d="M1345.5 120 v4 M1345.5 674 v-4" stroke="#000" stroke-width="1"/>
<path d="M737 151.5 h4 M1421 151.5 h-4" stroke="#000" stroke-width="1"/>
<path d="M737 252.5 h4 M1421 252.5 h-4" stroke="#000" stroke-width="1"/>
<path d="M737 353.5 h4 M1421 353.5 h-4" stroke="#000" stroke-width="1"/>
<path d="M737 453.5 h4 M1421 453.5 h-4" stroke="#000" stroke-width="1"/>
<path d="M737 554.5 h4 M1421 554.5 h-4" stroke="#000" stroke-width="1"/>
<path d="M737 655.5 h4 M1421 655.5 h-4" stroke="#000" stroke-width="1"/>
 <text x="740.3" y="691" font-size="12" text-anchor="middle" font-family="Liberation Sans, sans-serif">-280</text>
 <text x="841.1" y="691" font-size="12" text-anchor="middle" font-family="Liberation Sans, sans-serif">-275</text>
 <text x="941.9" y="691" font-size="12" text-anchor="middle" font-family="Liberation Sans, sans-serif">-270</text>
 <text x="1042.7" y="691" font-size="12" text-anchor="middle" font-family="Liberation Sans, sans-serif">-265</text>
 <text x="1143.5" y="691" font-size="12" text-anchor="middle" font-family="Liberation Sans, sans-serif">-260</text>
 <text x="1244.3" y="691" font-size="12" text-anchor="middle" font-family="Liberation Sans, sans-serif">-255</text>
 <text x="1345.1" y="691" font-size="12" text-anchor="middle" font-family="Liberation Sans, sans-serif">-250</text>
<text x="730.6" y="156.7" font-size="12" text-anchor="end" font-family="Liberation Sans, sans-serif">-30</text>
<text x="730.6" y="257.5" font-size="12" text-anchor="end" font-family="Liberation Sans, sans-serif">-35</text>
<text x="730.6" y="358.3" font-size="12" text-anchor="end" font-family="Liberation Sans, sans-serif">-40</text>
<text x="730.6" y="459.1" font-size="12" text-anchor="end" font-family="Liberation Sans, sans-serif">-45</text>
<text x="730.6" y="559.9" font-size="12" text-anchor="end" font-family="Liberation Sans, sans-serif">-50</text>
<text x="730.6" y="660.7" font-size="12" text-anchor="end" font-family="Liberation Sans, sans-serif">-55</text>
<text x="1047.8" y="394.2" font-size="12" font-family="Liberation Sans, sans-serif">15</text>
<text x="1228.6" y="590.2" font-size="12" font-family="Liberation Sans, sans-serif">3</text>
</svg>

<!-- Messages panel -->
<div class="panel" id="p4" style="left:689px;top:718px;width:747px;height:112px"></div>
<svg id="p4tab" style="left:689px;top:718px" width="747" height="26" viewBox="0 0 747 26">
  <path d="M1 23.500 V7 Q1 1 7 1 H87 C100 1 105 23.500 123 23.500 Z" fill="url(#g1)"/>
  <path d="M87 0.500 C100 0.500 105 23.500 123 23.500 H746" fill="none" stroke="#a0a0a0" stroke-width="1"/>
  <path d="M186.500 23.500 V6 Q186.500 1 182 0.500 M251.500 23.500 V6 Q251.500 1 247 0.500" fill="none" stroke="#a0a0a0" stroke-width="1"/>
</svg>
<div class="content" style="left:692px;top:744px;width:725px;height:67px"></div>
<div class="t" style="left:712px;top:724px"><span style="letter-spacing:-0.461px">Messages</span></div>
<div class="t" style="left:827px;top:724px"><span style="letter-spacing:-0.377px">Progress</span></div>
<div class="t" style="left:900px;top:724px"><span style="letter-spacing:-0.430px">Results</span></div>
<div class="t" style="left:692px;top:745px"><span style="letter-spacing:-0.559px">COMSOL 4.0.0.982</span></div>
<div class="t" style="left:692px;top:760px"><span style="letter-spacing:-0.161px">Complete mesh consists of 1415 elements.</span></div>

<div class="abs" style="left:1075px;top:833px;width:1px;height:24px;background:#a0a0a0"></div>
<div class="t" style="left:1083px;top:838px"><span style="letter-spacing:-0.124px">Working set: 259 MB&nbsp; Virtual memory: 270 MB</span></div>

<!-- panel header icons: absolute page coords -->
<svg id="hdr" style="left:0;top:0" width="1440" height="760" viewBox="0 0 1440 760">
 <defs>
  <g id="minb"><rect x="0.5" y="0.5" width="9" height="3" fill="#fff" stroke="#5a5a5a"/></g>
  <g id="maxb"><rect x="0.5" y="0.5" width="9" height="9" fill="#fff" stroke="#5a5a5a"/><rect x="1" y="1" width="8" height="2" fill="#5a5a5a" opacity="0.85"/><rect x="1" y="2" width="8" height="1" fill="#fff"/></g>
  <linearGradient id="gDoor" x1="0" y1="0" x2="1" y2="1"><stop offset="0" stop-color="#9fcfe6"/><stop offset="1" stop-color="#d9edf5"/></linearGradient>
  <linearGradient id="gRef" x1="0" y1="0" x2="0" y2="1"><stop offset="0" stop-color="#35c6e6"/><stop offset="1" stop-color="#2f7fa6"/></linearGradient>
 </defs>
 <!-- crane icon -->
 <rect x="12" y="74" width="3" height="15" fill="#4e6b80"/><rect x="13" y="75" width="1" height="14" fill="#a9bccb"/>
 <rect x="8" y="77" width="16" height="1" fill="#5b7a90"/>
 <rect x="8" y="76" width="2" height="4" fill="#5b7a90"/>
 <rect x="19" y="78" width="1" height="7" fill="#a9bccb"/>
 <path d="M18 85 H19 V86 H20 V85 H21 V88 H18 Z" fill="#1e90e0"/>
 <!-- p1 buttons -->
 <path d="M314.5 74.5 H324.5 L319.5 79.5 Z" fill="#fff" stroke="#5a5a5a" stroke-linejoin="miter"/>
 <use href="#minb" x="333" y="74"/><use href="#maxb" x="351" y="74"/>
 <!-- settings icon -->
 <rect x="375" y="74" width="16" height="14" rx="1.5" fill="#d3e1ee"/>
 <rect x="377" y="75.3" width="2.4" height="1.5" fill="#12d012"/><rect x="382" y="75.3" width="2.4" height="1.5" fill="#12d012"/>
 <g fill="none" stroke="#5b7d96" stroke-width="1">
  <circle cx="378.2" cy="80.3" r="1.5"/><path d="M378.2 81.8 V85"/>
  <circle cx="383.2" cy="80.3" r="1.5"/><path d="M383.2 81.8 V85"/>
  <circle cx="388.2" cy="81.3" r="1.5"/><path d="M388.2 77 V79.8"/>
 </g>
 <rect x="387" y="85" width="2.4" height="1.8" fill="#ffa500"/>
 <rect x="386.5" y="83.5" width="4" height="1" fill="#fff" opacity="0.8"/>
 <!-- model library icon -->
 <rect x="459.5" y="73.5" width="14" height="15" fill="#fff" opacity="0.7"/>
 <rect x="460.5" y="74.5" width="12" height="13" fill="#4e6b80" stroke="#4e6b80"/>
 <rect x="461" y="75" width="2.4" height="12" fill="#1cbcf6"/><rect x="464" y="75" width="2.4" height="12" fill="#46b4e4"/><rect x="467" y="75" width="2.4" height="12" fill="#00c9bb"/><rect x="470" y="75" width="2.4" height="12" fill="#00c2b4"/>
 <rect x="462" y="76" width="1" height="5" fill="#fff"/><rect x="465" y="76" width="1" height="7" fill="#fff"/><rect x="468" y="76" width="1" height="3" fill="#fff"/><rect x="471" y="76" width="1" height="6" fill="#fff"/>
 <rect x="461" y="85" width="2.4" height="1.5" fill="#00f0e8"/><rect x="464" y="85" width="2.4" height="1.5" fill="#00f0e8"/><rect x="467" y="85" width="2.4" height="1.5" fill="#00f0e8"/><rect x="470" y="85" width="2.4" height="1.5" fill="#00f0e8"/>
 <!-- building icon -->
 <rect x="595" y="73" width="16" height="16" fill="#a9edf9"/>
 <path d="M598.5 89 V76 L600.5 73.5 H609.5 V89" fill="#dff6fa" stroke="#12a6c2" stroke-width="1"/>
 <path d="M600.5 74 V89" stroke="#12a6c2" stroke-width="1"/>
 <g fill="#12a6c2">
  <rect x="602" y="75" width="1.2" height="1.2"/><rect x="604" y="75" width="1.2" height="1.2"/><rect x="606" y="75" width="1.2" height="1.2"/>
  <rect x="602" y="77" width="1.2" height="1.2"/><rect x="604" y="77" width="1.2" height="1.2"/><rect x="606" y="77" width="1.2" height="1.2"/>
  <rect x="602" y="79" width="1.2" height="1.2"/><rect x="604" y="79" width="1.2" height="1.2"/><rect x="606" y="79" width="1.2" height="1.2"/>
  <rect x="602" y="81" width="1.2" height="1.2"/><rect x="604" y="81" width="1.2" height="1.2"/><rect x="606" y="81" width="1.2" height="1.2"/>
  <rect x="602" y="83" width="1.2" height="1.2"/><rect x="604" y="83" width="1.2" height="1.2"/><rect x="606" y="83" width="1.2" height="1.2"/>
  <rect x="604" y="86" width="2" height="3"/>
  <rect x="598" y="76" width="2.5" height="13"/>
 </g>
 <g fill="#fff"><rect x="599" y="75" width="1" height="1"/><rect x="599" y="77" width="1" height="1"/><rect x="599" y="79" width="1" height="1"/><rect x="599" y="81" width="1" height="1"/><rect x="599" y="83" width="1" height="1"/><rect x="599" y="85.5" width="1" height="3.5"/></g>
 <rect x="617" y="72" width="1" height="18" fill="#7f7f7f"/>
 <!-- laptop help (p2) -->
 <path d="M627.5 85.5 L630.5 88.5 H641.5 L638.5 85" fill="#9fb0bb" stroke="#a3b3be"/>
 <rect x="626.5" y="73.5" width="11" height="9" rx="1" fill="#dfe6ec" stroke="#4e6b80"/>
 <rect x="628.5" y="75.5" width="7" height="5.5" fill="#fff"/>
 <path d="M626.5 82.5 L629.5 86.5 H640.5 L637.5 82.5 Z" fill="#cfd8df" stroke="#4e6b80" stroke-linejoin="round"/>
 <path d="M629.5 84.5 H638" stroke="#8ea0ad"/>
 <text x="632.2" y="81" font-size="7.5" font-weight="bold" fill="#00c5b5" opacity="0.99" text-anchor="middle" font-family="Liberation Sans, sans-serif">?</text>
 <use href="#minb" x="651" y="74"/><use href="#maxb" x="669" y="74"/>
 <!-- graphics tab icon -->
 <defs><radialGradient id="gSph" cx="0.35" cy="0.35" r="0.7"><stop offset="0" stop-color="#b8f6fb"/><stop offset="0.6" stop-color="#19c3d9"/><stop offset="1" stop-color="#0aa0bd"/></radialGradient>
 <linearGradient id="gCone" x1="0" y1="0" x2="1" y2="0"><stop offset="0" stop-color="#e59ad4"/><stop offset="0.5" stop-color="#c86fb8"/><stop offset="1" stop-color="#b86aae"/></linearGradient></defs>
 <path d="M703.5 74 L707.6 84.5 Q704.5 86.5 701 85 Z" fill="url(#gCone)"/>
 <circle cx="698" cy="84" r="4" fill="url(#gSph)"/>
 <!-- graphics toolbar -->
 <rect x="1042.5" y="75.5" width="6" height="11" fill="url(#gDoor)" stroke="#3a98be"/>
 <rect x="1044" y="80" width="2" height="1" fill="#3a98be"/>
 <rect x="1065.5" y="75.5" width="6" height="11" fill="#c3e9f9" stroke="#1e9ad0"/>
 <path d="M1071.5 75.5 L1075.5 73.5 V88.5 L1071.5 86.5 Z" fill="#cfe3ea" stroke="#3a98be" stroke-linejoin="round"/>
 <path d="M1073 81.5 H1077" stroke="#3a98be"/>
 <path d="M1095.6 78.2 A5.2 5.2 0 1 1 1088.6 78" fill="none" stroke="url(#gRef)" stroke-width="2"/>
 <circle cx="1092.2" cy="82.3" r="5.9" fill="none" stroke="#8fc0d6" stroke-width="0.6"/>
 <path d="M1088.5 79 Q1091 76.6 1094 77.2" fill="none" stroke="#35c6e6" stroke-width="1.6"/>
 <path d="M1093 74.3 L1096.6 77.6 L1092.6 80.4 Z" fill="#35c6e6"/>
 <path d="M1111.5 76.5 H1119.5 L1121.5 78.5 V83.5 L1119.5 85.5 H1111.5 L1109.5 83.5 V78.5 Z" fill="#fbfbf4" stroke="#ffb400" stroke-width="1.2" stroke-linejoin="round"/>
 <path d="M1111.5 81 Q1115.5 77.2 1119.5 81 Q1115.5 84.8 1111.5 81 Z" fill="#e4f1f6" stroke="#2b7898" stroke-width="0.9"/>
 <circle cx="1115.5" cy="81" r="1.4" fill="#2b7898"/>
 <path d="M1131 79 H1139 L1135 83.5 Z" fill="#111"/>
 <rect x="1144" y="72" width="1" height="18" fill="#7f7f7f"/>
 <!-- zoom in -->
 <g id="mag">
  <path d="M1163 83.2 L1166.6 86.6" stroke="#3d6480" stroke-width="2.2" stroke-linecap="round"/>
  <circle cx="1159.6" cy="79.7" r="4.6" fill="#fff" stroke="#3d6480" stroke-width="1.6"/>
  <circle cx="1159.6" cy="79.7" r="4.6" fill="none" stroke="#86a5ba" stroke-width="0.5" stroke-dasharray="1 1"/>
 </g>
 <path d="M1157 79.7 H1162.2 M1159.6 77.1 V82.3" stroke="#3d6480" stroke-width="1"/>
 <use href="#mag" x="23.1"/>
 <path d="M1180.1 79.7 H1185.3" stroke="#3d6480" stroke-width="1"/>
 <!-- zoom box -->
 <g opacity="0.45"><use href="#mag" x="47.8"/><path d="M1204.8 79.7 H1210 M1207.4 77.1 V82.3" stroke="#3d6480" stroke-width="1"/></g>
 <rect x="1199.5" y="79.5" width="8" height="7" fill="none" stroke="#4a4a4a" stroke-width="1.2" stroke-dasharray="2.2 1.4"/>
 <!-- zoom extents -->
 <rect x="1222.5" y="73.5" width="14" height="14" fill="#f6f6f6" stroke="#505050"/>
 <path d="M1229.5 77.5 V83.5 M1226.5 80.5 H1232.500" stroke="#18b050" stroke-width="1.4"/>
 <path d="M1229.5 74.5 L1231.8 77 H1227.2 Z M1229.5 86.5 L1231.8 84 H1227.2 Z M1223.5 80.5 L1226 78.200 V82.800 Z M1235.5 80.500 L1233 78.200 V82.800 Z" fill="#18b050"/>
 <rect x="1244" y="72" width="1" height="18" fill="#7f7f7f"/>
 <!-- select -->
 <path d="M1255.500 76.500 L1257.500 74.500 H1266.500 V83 M1255.500 76.500 H1264.500 L1266.500 74.500 M1255.500 76.500 V85 H1258" fill="none" stroke="#b5e1e1" stroke-width="1"/>
 <rect x="1258.500" y="78.500" width="9" height="9" fill="#f4f8f8" stroke="#444" stroke-width="1.2" stroke-dasharray="2.400 1.300"/>
 <rect x="1260.500" y="80.500" width="5" height="5" fill="#86eff6" stroke="#0095ad"/>
 <!-- lock -->
 <path d="M1283.500 79.500 H1289 L1291.500 77.500 V83.500 L1289 85.500 H1283.500 Z M1289 79.500 V85.500 M1284.500 79.500 V77 Q1285 74.500 1287.500 74.500 Q1290.500 74.500 1290.500 77.800" fill="none" stroke="#a4a4a4" stroke-width="0.9"/>
 <!-- transparency -->
 <path d="M1299.500 79.500 L1301.500 77.500 H1307 V83.500 L1305 85.500 H1299.500 Z" fill="#fff" stroke="#a9e3e6" stroke-width="0.9"/>
 <path d="M1306.500 79.500 L1308.500 77.500 H1314.500 V83.500 L1312.500 85.500 H1306.500 Z" fill="#00c4cf" stroke="#008fa6" stroke-width="1" stroke-linejoin="round"/>
 <rect x="1306.500" y="79.500" width="6" height="6" fill="#a6f6f8" stroke="#008fa6"/>
 <!-- selected cube -->
 <rect x="1319.500" y="70.500" width="22" height="20" fill="#c4dcf3" stroke="#92c1ee"/>
 <path d="M1324.500 75.500 H1334.500 L1337.500 78 V86.500 H1327.500 L1324.500 83.500 Z" fill="#7fd2fa" stroke="#5c5c5c" stroke-linejoin="round"/>
 <rect x="1327.500" y="78.500" width="10" height="8" fill="#33b5f0" stroke="#5c5c5c"/>
 <rect x="1329" y="80" width="7" height="4" fill="#55c4f5"/>
 <path d="M1324.500 75.500 L1327.500 78.500" stroke="#5c5c5c"/>
 <!-- wireframe w/ blue squares -->
 <path d="M1346.500 75.500 H1356.500 L1359.500 78.500 V86.500 H1349.500 L1346.500 83 Z M1349.500 78.500 H1359.500 M1349.500 78.500 V86.500 M1346.500 75.500 L1349.500 78.500 M1356.500 75.500 V83 H1346.500 M1356.500 83 L1359.500 86.500" fill="none" stroke="#c2ab98" stroke-width="0.9"/>
 <g fill="#1e90ff"><rect x="1345" y="74" width="3" height="3"/><rect x="1355" y="74" width="3" height="3"/><rect x="1348" y="77" width="3" height="3"/><rect x="1358" y="77" width="3" height="3"/><rect x="1345" y="81.500" width="3" height="3"/><rect x="1355" y="81.500" width="3" height="3"/><rect x="1348" y="85" width="3" height="3"/><rect x="1358" y="85" width="3" height="3"/></g>
 <rect x="1367" y="72" width="1" height="18" fill="#7f7f7f"/>
 <!-- camera -->
 <defs><linearGradient id="gCam" x1="0" y1="0" x2="1" y2="0"><stop offset="0" stop-color="#222"/><stop offset="0.2" stop-color="#8a8a8a"/><stop offset="0.5" stop-color="#333"/><stop offset="1" stop-color="#555"/></linearGradient></defs>
 <path d="M1376 77.500 H1380.500 L1381.500 75.500 H1386.500 L1387.500 77.500 H1392 V87 H1376 Z" fill="url(#gCam)" stroke="#111" stroke-width="0.800"/>
 <circle cx="1384" cy="82" r="3.600" fill="#555" stroke="#999" stroke-width="0.700"/>
 <circle cx="1384" cy="82" r="2.100" fill="#111"/>
 <rect x="1384.500" y="80.300" width="1.200" height="1.200" fill="#ddd"/>
 <rect x="1389.500" y="79" width="1" height="1" fill="#20c020"/>
 <use href="#minb" x="1401" y="74"/><use href="#maxb" x="1419" y="74"/>
 <!-- messages panel -->
 <rect x="693.500" y="725.500" width="14" height="9" fill="#f5f9fc" stroke="#7f9fb8"/>
 <path d="M694 726 L700.500 731 L707 726 M694 734 L698.500 729.700 M707 734 L702.500 729.700" fill="none" stroke="#9fb8cc" stroke-width="0.800"/>
 <path transform="translate(0,-1)" d="M772.500 726.500 H775 L777 728.500 L779 726.500 H781.500 V728.200 L778.800 730.900 L781.500 733.500 V735.500 H779 L777 733.500 L775 735.500 H772.500 V733.500 L775.200 730.900 L772.500 728.200 Z" fill="#fff" stroke="#555" stroke-width="0.900"/>
 <rect x="807.500" y="727.500" width="15" height="5" rx="1" fill="#e8e8e8" stroke="#8a8a8a" stroke-width="0.900"/>
 <rect x="808" y="728.300" width="8" height="3.400" fill="#5cc400"/>
 <path d="M810 728 v4 M812 728 v4 M814 728 v4" stroke="#a6e060" stroke-width="0.600"/>
 <path d="M818 728.500 v3 M820 728.500 v3" stroke="#c8c8c8" stroke-width="0.800"/>
 <rect x="882.500" y="723.500" width="11" height="14" fill="#f2f8fc" stroke="#7f9fb8"/>
 <path d="M885.500 726.500 H891 M885.500 728.500 H891 M885.500 730.500 H891 M885.500 732.500 H891 M885.500 734.500 H891" stroke="#7fa8c8" stroke-width="0.900"/>
 <path d="M884 726.500 h1 M884 728.500 h1 M884 730.500 h1 M884 732.500 h1 M884 734.500 h1" stroke="#1e90ff" stroke-width="0.900"/>
 <use href="#minb" x="1401" y="723"/><use href="#maxb" x="1419" y="723"/>
 <!-- scroll arrows -->
 <path d="M1421.200 754.500 L1424.600 751 L1428 754.500 M1421.200 800.500 L1424.600 804 L1428 800.500 M702.500 815 L698 818.600 L702.500 822.200 M1405.500 815 L1410 818.600 L1405.500 822.200" fill="none" stroke="#adadad" stroke-width="1.800"/>
 <!-- mesh title icon -->
 <use href="#meshico" x="380" y="104"/>
</svg>


</body></html>
